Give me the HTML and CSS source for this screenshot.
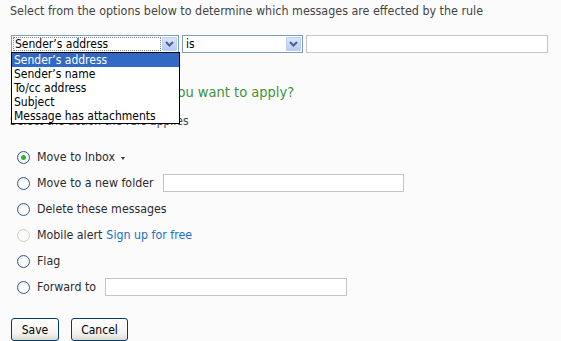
FILE: index.html
```html
<!DOCTYPE html>
<html>
<head>
<meta charset="utf-8">
<link rel="stylesheet" href="styles.css">
</head>
<body>
<div class="page">
  <p class="intro">Select from the options below to determine which messages are effected by the rule</p>
  <div class="criteria">
    <div class="field-wrap">
      <div class="select sel-field">
        <span class="value focused">Sender’s address</span>
        <span class="arrow"><svg width="9" height="6" viewBox="0 0 9 6"><path d="M1 1 L4.5 4.5 L8 1" fill="none" stroke="#4d6185" stroke-width="2"/></svg></span>
      </div>
      <ul class="dropdown">
        <li class="hl">Sender’s address</li>
        <li>Sender’s name</li>
        <li>To/cc address</li>
        <li>Subject</li>
        <li>Message has attachments</li>
      </ul>
    </div>
    <div class="select sel-op">
      <span class="value">is</span>
      <span class="arrow"><svg width="9" height="6" viewBox="0 0 9 6"><path d="M1 1 L4.5 4.5 L8 1" fill="none" stroke="#4d6185" stroke-width="2"/></svg></span>
    </div>
    <div class="textbox crit-text"></div>
  </div>
  <h2 class="step">Step 2: Which action do you want to apply?</h2>
  <p class="sub">Select the action the rule applies</p>
  <ul class="actions">
    <li><span class="radio checked"></span><span class="label">Move to Inbox</span><span class="caret"></span></li>
    <li><span class="radio"></span><span class="label">Move to a new folder</span><span class="textbox folder-text"></span></li>
    <li><span class="radio"></span><span class="label">Delete these messages</span></li>
    <li><span class="radio disabled"></span><span class="label">Mobile alert</span><a class="link" href="#">Sign up for free</a></li>
    <li><span class="radio"></span><span class="label">Flag</span></li>
    <li><span class="radio"></span><span class="label">Forward to</span><span class="textbox fwd-text"></span></li>
  </ul>
  <div class="buttons">
    <button class="btn btn-save">Save</button>
    <button class="btn btn-cancel">Cancel</button>
  </div>
</div>
</body>
</html>
```
FILE: styles.css
```css
html, body {
  margin: 0;
  padding: 0;
  background: #fbfbfb;
}
body {
  font-family: "DejaVu Sans Condensed", "DejaVu Sans", sans-serif;
  font-size: 12px;
  color: #333;
}
.page {
  padding: 4px 0 0 10px;
}
.intro {
  margin: 0;
  line-height: 14px;
  font-size: 12.4px;
  color: #444;
}
.criteria {
  display: flex;
  align-items: flex-start;
  margin: 17px 0 0 1px;
  height: 18px;
}
.field-wrap {
  position: relative;
  width: 168px;
}
.select {
  box-sizing: border-box;
  height: 18px;
  border: 1px solid #7f9db9;
  background: #fff;
  display: flex;
  align-items: stretch;
  padding: 1px;
}
.sel-field { width: 168px; }
.sel-op { width: 121px; margin-left: 3px; }
.value {
  flex: 1;
  line-height: 14px;
  padding-left: 2px;
  color: #000;
  font-size: 12px;
}
.value.focused {
  outline: 1px dotted #888;
  outline-offset: -1px;
}
.arrow {
  width: 15px;
  margin-left: 1px;
  box-sizing: border-box;
  border: 1px solid #b9cff7;
  background: linear-gradient(#dbe6fd, #b8cbf5);
  border-radius: 1px;
  display: flex;
  align-items: center;
  justify-content: center;
}
.textbox {
  box-sizing: border-box;
  display: block;
  height: 18px;
  border: 1px solid #c4c4c4;
  background: #fff;
}
.crit-text { width: 242px; margin-left: 3px; }
.dropdown {
  position: absolute;
  left: 0;
  top: 17px;
  width: 169px;
  box-sizing: border-box;
  margin: 0;
  padding: 0;
  list-style: none;
  background: #fff;
  border: 1px solid #000;
  z-index: 5;
  font-size: 12px;
  color: #000;
}
.dropdown li {
  line-height: 14px;
  padding-left: 2px;
}
.dropdown li.hl {
  background: #316ac5;
  color: #fff;
}
.step {
  margin: 30px 0 0;
  font-size: 14.5px;
  font-weight: normal;
  line-height: 18px;
  color: #3b933b;
}
.sub {
  margin: 13px 0 0;
  line-height: 14px;
  color: #444;
}
.actions {
  list-style: none;
  margin: 16px 0 0;
  padding: 0 0 0 7px;
}
.actions li {
  display: flex;
  align-items: center;
  height: 26px;
  font-size: 12.3px;
  color: #2b2b2b;
}
.radio {
  box-sizing: border-box;
  width: 13px;
  height: 13px;
  border-radius: 50%;
  border: 1px solid #2f5b8a;
  background: radial-gradient(circle at 60% 60%, #ffffff 35%, #dcdcd6 100%);
  margin-right: 7px;
  position: relative;
  flex: none;
}
.radio.checked::after {
  content: "";
  position: absolute;
  left: 3px;
  top: 3px;
  width: 5px;
  height: 5px;
  border-radius: 50%;
  background: #2fb52f;
}
.radio.disabled {
  border-color: #cfcdc4;
  background: #fbfbfb;
}
.caret {
  width: 0;
  height: 0;
  border-left: 2.5px solid transparent;
  border-right: 2.5px solid transparent;
  border-top: 3px solid #333;
  margin-left: 6px;
  margin-top: 2px;
}
.folder-text { width: 241px; margin-left: 9px; }
.fwd-text { width: 242px; margin-left: 9px; }
.link {
  color: #1a6fc8;
  text-decoration: none;
  margin-left: 4px;
}
.buttons {
  display: flex;
  gap: 12px;
  margin: 18px 0 0 1px;
}
.btn {
  box-sizing: border-box;
  height: 23px;
  font-family: "DejaVu Sans Condensed", "DejaVu Sans", sans-serif;
  font-size: 12px;
  color: #000;
  border: 1px solid #003c74;
  border-radius: 3px;
  background: linear-gradient(#ffffff, #f4f3ee 70%, #dcd9cc);
  padding: 0;
}
.btn-save { width: 48px; }
.btn-cancel { width: 57px; }
```
